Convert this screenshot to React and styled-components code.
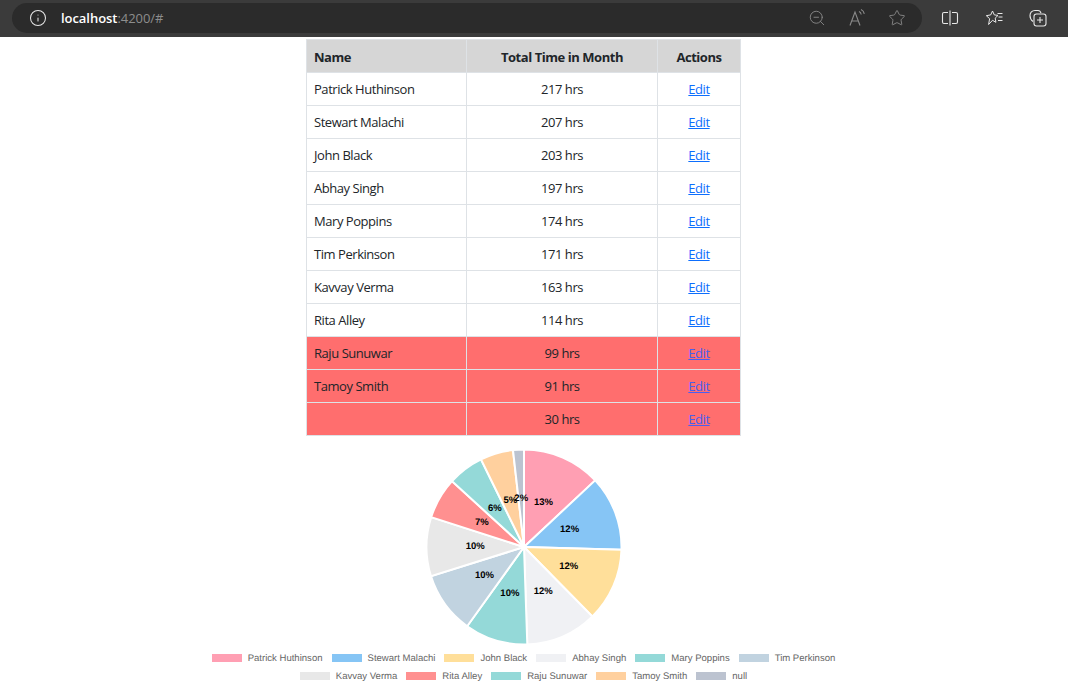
import styled, { createGlobalStyle } from "styled-components";
import { Info, ZoomOut, Star } from "lucide-react";

const GlobalStyle = createGlobalStyle`
  body {
    margin: 0;
    background: #fff;
    font-family: "Open Sans", "Noto Sans", sans-serif;
    overflow: hidden;
  }
`;

const Toolbar = styled.div`
  height: 37px;
  box-sizing: border-box;
  padding: 3px 0 4px 12px;
  background: #3b3b3b;
  display: flex;
  align-items: stretch;
`;

const AddressBar = styled.div`
  width: 910px;
  background: #2b2b2b;
  border-radius: 15px;
  display: flex;
  align-items: center;
  padding: 0 5px 0 17px;
  box-sizing: border-box;
  color: #e6e6e6;
`;

const Url = styled.div`
  margin-left: 14px;
  font-size: 13px;
  font-weight: 600;
  letter-spacing: -0.05px;
  color: #fff;
  flex: 1;
  span {
    color: #8d8d8d;
    font-weight: 400;
  }
`;

const IconSlot = styled.div`
  width: 40px;
  display: flex;
  align-items: center;
  justify-content: center;
  color: ${(p) => p.$color || "#e8e8e8"};
`;

const ToolIcons = styled.div`
  display: flex;
  margin-left: 8px;
  gap: 4px;
`;

const Main = styled.div`
  width: 1047px;
  padding-top: 2px;
  display: flex;
  flex-direction: column;
  align-items: center;
`;

const Table = styled.table`
  width: 434px;
  table-layout: fixed;
  border-collapse: collapse;
  font-size: 13px;
  letter-spacing: -0.45px;
  color: #212529;
`;

const Th = styled.th`
  background: #d6d6d6;
  border: 1px solid #dee2e6;
  padding: 1px 7px 0;
  height: 33px;
  box-sizing: border-box;
  font-weight: 700;
  font-size: 13px;
  text-align: ${(p) => (p.$left ? "left" : "center")};
`;

const Td = styled.td`
  background: ${(p) => (p.$low ? "#ff6e6e" : "#fff")};
  border: 1px solid #dee2e6;
  padding: 0 7px;
  height: 33px;
  box-sizing: border-box;
  text-align: ${(p) => (p.$left ? "left" : "center")};
`;

const EditLink = styled.a`
  color: ${(p) => (p.$low ? "#4a5ff0" : "#0d6efd")};
  text-decoration: underline;
`;

const Pie = styled.svg`
  display: block;
  margin-top: 11px;
`;

const PieLabel = styled.text`
  font-family: "Liberation Sans", Arial, sans-serif;
  font-size: 9.5px;
  font-weight: 700;
  fill: #000;
  text-anchor: middle;
  dominant-baseline: middle;
  text-rendering: geometricPrecision;
`;

const Legend = styled.div`
  width: 640px;
  margin-top: 2px;
  display: flex;
  flex-wrap: wrap;
  justify-content: center;
  column-gap: 9px;
  font-family: "Liberation Sans", Arial, sans-serif;
  font-size: 9.55px;
  color: #666;
  text-rendering: geometricPrecision;
`;

const LegendItem = styled.div`
  height: 18px;
  display: flex;
  align-items: center;
  gap: 6px;
`;

const Swatch = styled.div`
  width: 30px;
  height: 8px;
  background: ${(p) => p.$color};
`;

const rows = [
  { name: "Patrick Huthinson", hours: 217, color: "#ff9fb3" },
  { name: "Stewart Malachi", hours: 207, color: "#86c5f5" },
  { name: "John Black", hours: 203, color: "#ffdf9a" },
  { name: "Abhay Singh", hours: 197, color: "#f0f1f4" },
  { name: "Mary Poppins", hours: 174, color: "#94d9d8" },
  { name: "Tim Perkinson", hours: 171, color: "#c1d3e0" },
  { name: "Kavvay Verma", hours: 163, color: "#e8e8e8" },
  { name: "Rita Alley", hours: 114, color: "#ff9090" },
  { name: "Raju Sunuwar", hours: 99, color: "#94d9d8" },
  { name: "Tamoy Smith", hours: 91, color: "#ffd09e" },
  { name: "", hours: 30, color: "#bcc3d0" },
];

const total = rows.reduce((sum, r) => sum + r.hours, 0);
const CX = 100;
const CY = 100;
const R = 97.5;

const point = (angle, radius) => [
  CX + radius * Math.sin(angle),
  CY - radius * Math.cos(angle),
];

let start = 0;
const slices = rows.map((r) => {
  const sweep = (r.hours / total) * Math.PI * 2;
  const from = start;
  start += sweep;
  const [x1, y1] = point(from, R);
  const [x2, y2] = point(from + sweep, R);
  const [lx, ly] = point(from + sweep / 2, R / 2);
  return {
    ...r,
    d: `M${CX} ${CY}L${x1} ${y1}A${R} ${R} 0 0 1 ${x2} ${y2}Z`,
    lx,
    ly,
    pct: Math.round((r.hours / total) * 100),
  };
});

const ReadAloud = () => (
  <svg width="20" height="20" viewBox="0 0 20 20" fill="none" stroke="currentColor" strokeWidth="1.1">
    <path d="M3 17.5 8 4l5 13.5M4.8 13h6.4" />
    <path d="M12 3.5c1.3.6 2 1.6 2.2 3M14 1.5c2 .9 3 2.4 3.3 4.4" />
  </svg>
);

const SplitScreen = () => (
  <svg width="18" height="18" viewBox="0 0 18 18" fill="none" stroke="currentColor" strokeWidth="1.1">
    <path d="M7 3.5H3a1.5 1.500 0 0 0-1.500 1.500v8A1.500 1.500 0 0 0 3 14.500h4M11 3.500h4A1.500 1.500 0 0 1 16.500 5v8a1.500 1.500 0 0 1-1.500 1.500h-4M9 1.500v15" />
  </svg>
);

const Favorites = () => (
  <svg width="20" height="20" viewBox="0 0 20 20" fill="none" stroke="currentColor" strokeWidth="1">
    <path d="M8.500 3l1.800 3.900 3.700.5-2.800 2.700.7 4.200-3.400-2-3.900 4.200 1-5.800-3.300-3 4.400-.8z" strokeLinejoin="round" />
    <path d="M13.500 5.500h5M14.500 9h4M14 12.500h4.500" />
  </svg>
);

const Collections = () => (
  <svg width="20" height="20" viewBox="0 0 20 20" fill="none" stroke="currentColor" strokeWidth="1.1">
    <path d="M5 13.500C3 12 2 10 2 7.500 2 4.500 4 2.500 7 2.500h3c1.500 0 2.500.8 3 2.500" />
    <rect x="6" y="6" width="12" height="12" rx="2.500" />
    <path d="M12 9v6M9 12h6" />
  </svg>
);

const App = () => {
  return (
    <>
      <GlobalStyle />
      <Toolbar>
        <AddressBar>
          <Info size={18} strokeWidth={1.4} />
          <Url>
            localhost<span>:4200/#</span>
          </Url>
          <IconSlot $color="#8a8a8a">
            <ZoomOut size={18} strokeWidth={1.2} />
          </IconSlot>
          <IconSlot $color="#8a8a8a">
            <ReadAloud />
          </IconSlot>
          <IconSlot $color="#8a8a8a">
            <Star size={18} strokeWidth={1.2} />
          </IconSlot>
        </AddressBar>
        <ToolIcons>
          <IconSlot>
            <SplitScreen />
          </IconSlot>
          <IconSlot>
            <Favorites />
          </IconSlot>
          <IconSlot>
            <Collections />
          </IconSlot>
        </ToolIcons>
      </Toolbar>
      <Main>
        <Table>
          <colgroup>
            <col style={{ width: 160 }} />
            <col style={{ width: 191 }} />
            <col style={{ width: 83 }} />
          </colgroup>
          <thead>
            <tr>
              <Th $left>Name</Th>
              <Th>Total Time in Month</Th>
              <Th>Actions</Th>
            </tr>
          </thead>
          <tbody>
            {rows.map((r) => {
              const low = r.hours < 100;
              return (
                <tr key={r.hours}>
                  <Td $left $low={low}>{r.name}</Td>
                  <Td $low={low}>{r.hours} hrs</Td>
                  <Td $low={low}>
                    <EditLink href="#" $low={low}>Edit</EditLink>
                  </Td>
                </tr>
              );
            })}
          </tbody>
        </Table>
        <Pie width="200" height="200" viewBox="0 0 200 200">
          {slices.map((s) => (
            <path key={s.hours} d={s.d} fill={s.color} stroke="#fff" strokeWidth="2" />
          ))}
          {slices.map((s) => (
            <PieLabel key={s.hours} x={s.lx} y={s.ly}>{s.pct}%</PieLabel>
          ))}
        </Pie>
        <Legend>
          {rows.map((r) => (
            <LegendItem key={r.hours}>
              <Swatch $color={r.color} />
              {r.name || "null"}
            </LegendItem>
          ))}
        </Legend>
      </Main>
    </>
  );
};

export default App;
